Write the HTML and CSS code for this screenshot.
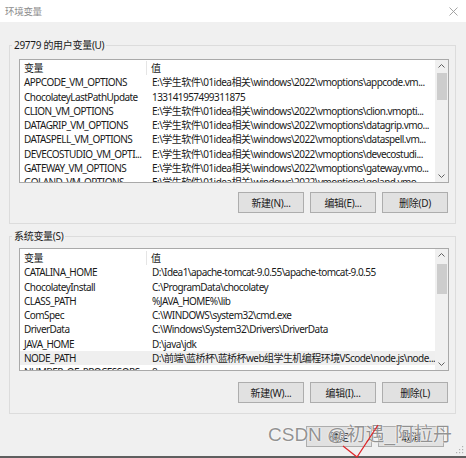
FILE: index.html
```html
<!DOCTYPE html>
<html lang="zh-CN">
<head>
<meta charset="utf-8">
<title>环境变量</title>
<link rel="stylesheet" href="styles.css">
</head>
<body>
<div class="window">
  <div class="titlebar">
    <span class="title">环境变量</span>
    <svg class="close" width="9" height="9" viewBox="0 0 9 9"><path d="M0.5 0.5L8.5 8.5M8.5 0.5L0.5 8.5" stroke="#9a9a9a" stroke-width="0.9" fill="none"/></svg>
  </div>
  <div class="main">
    <div class="group group-user">
      <span class="group-label">29779 的用户变量(U)</span>
      <div class="listbox list-user">
        <div class="rows">
          <div class="row head"><span class="c1">变量</span><span class="c2">值</span></div>
          <div class="row"><span class="c1">APPCODE_VM_OPTIONS</span><span class="c2">E:\学生软件\01idea相关\windows\2022\vmoptions\appcode.vm...</span></div>
          <div class="row"><span class="c1">ChocolateyLastPathUpdate</span><span class="c2">133141957499311875</span></div>
          <div class="row"><span class="c1">CLION_VM_OPTIONS</span><span class="c2">E:\学生软件\01idea相关\windows\2022\vmoptions\clion.vmopti...</span></div>
          <div class="row"><span class="c1">DATAGRIP_VM_OPTIONS</span><span class="c2">E:\学生软件\01idea相关\windows\2022\vmoptions\datagrip.vmo...</span></div>
          <div class="row"><span class="c1">DATASPELL_VM_OPTIONS</span><span class="c2">E:\学生软件\01idea相关\windows\2022\vmoptions\dataspell.vm...</span></div>
          <div class="row"><span class="c1">DEVECOSTUDIO_VM_OPTI...</span><span class="c2">E:\学生软件\01idea相关\windows\2022\vmoptions\devecostudi...</span></div>
          <div class="row"><span class="c1">GATEWAY_VM_OPTIONS</span><span class="c2">E:\学生软件\01idea相关\windows\2022\vmoptions\gateway.vmo...</span></div>
          <div class="row"><span class="c1">GOLAND_VM_OPTIONS</span><span class="c2">E:\学生软件\01idea相关\windows\2022\vmoptions\goland.vmo...</span></div>
        </div>
        <div class="scrollbar">
          <svg class="arrow" width="13" height="12" viewBox="0 0 13 12"><path d="M3.5 7.5L6.5 4.5L9.5 7.5" stroke="#606060" stroke-width="1" fill="none"/></svg>
          <div class="track"><div class="thumb thumb-user"></div></div>
          <svg class="arrow" width="13" height="12" viewBox="0 0 13 12"><path d="M3.5 4.5L6.5 7.5L9.5 4.5" stroke="#606060" stroke-width="1" fill="none"/></svg>
        </div>
      </div>
      <div class="buttons">
        <button class="btn">新建(N)...</button>
        <button class="btn">编辑(E)...</button>
        <button class="btn">删除(D)</button>
      </div>
    </div>

    <div class="group group-sys">
      <span class="group-label">系统变量(S)</span>
      <div class="listbox list-sys">
        <div class="rows">
          <div class="row head"><span class="c1">变量</span><span class="c2">值</span></div>
          <div class="row"><span class="c1">CATALINA_HOME</span><span class="c2">D:\Idea1\apache-tomcat-9.0.55\apache-tomcat-9.0.55</span></div>
          <div class="row"><span class="c1">ChocolateyInstall</span><span class="c2">C:\ProgramData\chocolatey</span></div>
          <div class="row"><span class="c1">CLASS_PATH</span><span class="c2">%JAVA_HOME%\lib</span></div>
          <div class="row"><span class="c1">ComSpec</span><span class="c2">C:\WINDOWS\system32\cmd.exe</span></div>
          <div class="row"><span class="c1">DriverData</span><span class="c2">C:\Windows\System32\Drivers\DriverData</span></div>
          <div class="row"><span class="c1">JAVA_HOME</span><span class="c2">D:\java\jdk</span></div>
          <div class="row selected"><span class="c1">NODE_PATH</span><span class="c2">D:\前端\蓝桥杯\蓝桥杯web组学生机编程环境VScode\node.js\node...</span></div>
          <div class="row"><span class="c1">NUMBER_OF_PROCESSORS</span><span class="c2">8</span></div>
        </div>
        <div class="scrollbar">
          <svg class="arrow" width="13" height="12" viewBox="0 0 13 12"><path d="M3.5 7.5L6.5 4.5L9.5 7.5" stroke="#606060" stroke-width="1" fill="none"/></svg>
          <div class="track"><div class="thumb thumb-sys"></div></div>
          <svg class="arrow" width="13" height="12" viewBox="0 0 13 12"><path d="M3.5 4.5L6.5 7.5L9.5 4.5" stroke="#606060" stroke-width="1" fill="none"/></svg>
        </div>
      </div>
      <div class="buttons">
        <button class="btn">新建(W)...</button>
        <button class="btn">编辑(I)...</button>
        <button class="btn">删除(L)</button>
      </div>
    </div>

    <div class="footer">
      <button class="btn">确定</button>
      <button class="btn">取消</button>
    </div>
  </div>
  <div class="bottom-strip"></div>
</div>
<div class="watermark">CSDN @初遇_阿拉丹</div>
<svg class="check" width="50" height="40" viewBox="0 0 50 40"><path d="M3 24L17 35L38 3" stroke="#e0262a" stroke-width="1.2" fill="none"/></svg>
<svg class="grip" width="8" height="8" viewBox="0 0 8 8"><g fill="#b0b0b0"><rect x="6" y="0" width="1.2" height="1.2"/><rect x="3" y="3" width="1.2" height="1.2"/><rect x="6" y="3" width="1.2" height="1.2"/><rect x="0" y="6" width="1.2" height="1.2"/><rect x="3" y="6" width="1.2" height="1.2"/><rect x="6" y="6" width="1.2" height="1.2"/></g></svg>
</body>
</html>
```
FILE: styles.css
```css
* { box-sizing: border-box; }
html, body {
  margin: 0;
  padding: 0;
}
body {
  width: 466px;
  height: 458px;
  overflow: hidden;
  position: relative;
  background: #f0f0f0;
  font-family: "Noto Sans", "Noto Sans CJK SC", sans-serif;
  font-size: 10px;
  color: #1a1a1a;
}
.window {
  display: flex;
  flex-direction: column;
  height: 458px;
}
.titlebar {
  height: 22px;
  background: #ffffff;
  display: flex;
  align-items: center;
  justify-content: space-between;
  padding: 0 8px 0 5px;
  flex: none;
}
.title {
  font-size: 9.5px;
  color: #8c8c8c;
  letter-spacing: -0.3px;
}
.main {
  flex: 1;
  padding: 23px 10px 0 9px;
  display: flex;
  flex-direction: column;
}
.group {
  position: relative;
  border: 1px solid #dcdcdc;
  padding: 13px 6px 10px 9px;
}
.group-sys {
  margin-top: 12px;
  padding-top: 11px;
}
.group-label {
  position: absolute;
  top: -8px;
  left: 2px;
  padding: 0 2px;
  line-height: 14px;
  background: #f0f0f0;
  color: #1a1a1a;
  letter-spacing: -0.3px;
}
.listbox {
  display: flex;
  border: 1px solid #a9a9a9;
  background: #ffffff;
  height: 124px;
}
.list-sys { height: 123px; }
.rows {
  flex: 1;
  min-width: 0;
  overflow: hidden;
  padding-top: 1px;
}
.list-sys .rows { padding-top: 2px; }
.row {
  display: flex;
  height: 14.25px;
  line-height: 14.25px;
  white-space: nowrap;
  letter-spacing: -0.55px;
}
.row.selected { background: #efefef; }
.c1 {
  width: 127px;
  flex: none;
  padding-left: 4px;
  overflow: hidden;
}
.c2 {
  flex: 1;
  min-width: 0;
  padding-left: 5px;
  overflow: hidden;
}
.head .c1 { border-right: 1px solid #e5e5e5; }
.head .c2 { padding-left: 4px; }
.scrollbar {
  width: 13px;
  flex: none;
  background: #f0f0f0;
  display: flex;
  flex-direction: column;
}
.arrow { display: block; flex: none; }
.track {
  flex: 1;
  padding: 1px 1px 0 1px;
}
.thumb {
  margin: 0 auto;
  width: 10px;
  background: #cdcdcd;
}
.thumb-user { height: 27px; }
.thumb-sys { margin-top: 2px; height: 30px; }
.buttons {
  display: flex;
  justify-content: flex-end;
  gap: 6px;
  margin-top: 9px;
  padding-right: 1px;
}
.group-sys .buttons { margin-top: 11px; }
.btn {
  width: 66px;
  height: 21px;
  padding: 0;
  margin: 0;
  border: 1px solid #adadad;
  background: #e1e1e1;
  font-family: "Noto Sans", "Noto Sans CJK SC", sans-serif;
  font-size: 10px;
  color: #1a1a1a;
  letter-spacing: -0.3px;
}
.footer {
  display: flex;
  justify-content: flex-end;
  gap: 6px;
  margin-top: 12px;
  padding-right: 12px;
}
.bottom-strip {
  height: 2px;
  flex: none;
  background: #5f5f5f;
}
.watermark {
  position: absolute;
  left: 268px;
  top: 423px;
  font-family: "Liberation Sans", "Noto Sans CJK SC", sans-serif;
  font-size: 19px;
  line-height: 24px;
  color: rgba(110, 110, 110, 0.75);
  text-shadow: 0 0 1px #ffffff, 0 0 2px #ffffff;
  white-space: nowrap;
}
.check {
  position: absolute;
  left: 340px;
  top: 422px;
}
.grip {
  position: absolute;
  right: 2px;
  bottom: 4px;
}
```
